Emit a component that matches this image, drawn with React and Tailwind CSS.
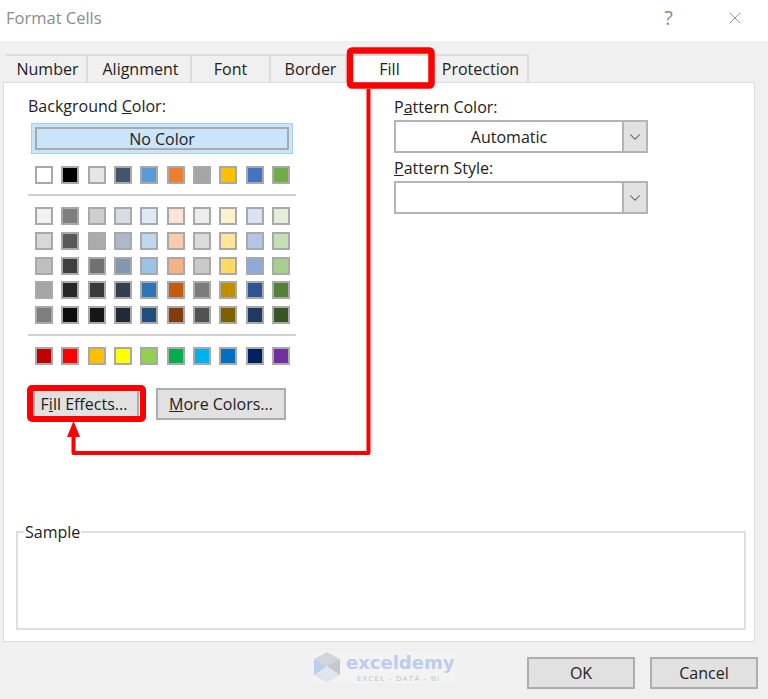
import { X, ChevronDown } from 'lucide-react';

const THEME = ['#ffffff', '#000000', '#e7e6e6', '#44546a', '#5b9bd5', '#ed7d31', '#a5a5a5', '#ffc000', '#4472c4', '#70ad47'];
const TINTS = [
  ['#f2f2f2', '#7f7f7f', '#d0cece', '#d6dce4', '#deebf6', '#fbe5d5', '#ededed', '#fff2cc', '#d9e2f3', '#e2efd9'],
  ['#d8d8d8', '#595959', '#aeaaaa', '#adb9ca', '#bdd7ee', '#f7cbac', '#dbdbdb', '#fee599', '#b4c6e7', '#c5e0b3'],
  ['#bfbfbf', '#3f3f3f', '#757070', '#8496b0', '#9cc3e5', '#f4b183', '#c9c9c9', '#ffd965', '#8eaadb', '#a8d08d'],
  ['#a5a5a5', '#262626', '#3a3838', '#323f4f', '#2e75b5', '#c55a11', '#7b7b7b', '#bf8f00', '#2f5496', '#538135'],
  ['#7f7f7f', '#0c0c0c', '#171616', '#222a35', '#1e4e79', '#833c0b', '#525252', '#7f6000', '#1f3864', '#375623'],
];
const STANDARD = ['#c00000', '#ff0000', '#ffc000', '#ffff00', '#92d050', '#00b050', '#00b0f0', '#0070c0', '#002060', '#7030a0'];

const TABS = [
  { label: 'Number', width: 'w-[82px] pl-[3px]' },
  { label: 'Alignment', width: 'w-[104px] pl-[3px]' },
  { label: 'Font', width: 'w-[79px]' },
  { label: 'Border', width: 'w-[76px] pl-[5px]' },
  { label: 'Fill', width: 'w-[87px]', active: true },
  { label: 'Protection', width: 'w-[95px]' },
];

function SwatchRow({ colors }) {
  return (
    <div className="flex w-[255px] justify-between">
      {colors.map((c, i) => (
        <div key={i} className="h-[18px] w-[18px] border-2 border-[#a9a9a9]" style={{ backgroundColor: c }} />
      ))}
    </div>
  );
}

function Select({ value }) {
  return (
    <div className="flex h-[33px] w-[254px] border-2 border-[#b4b4b4] bg-white">
      <div className="flex flex-1 items-center justify-center text-[#222]">{value}</div>
      <div className="flex w-[24px] items-center justify-center border-l-2 border-[#b4b4b4] bg-[#e1e1e1]">
        <ChevronDown size={18} strokeWidth={1.4} className="text-[#555]" />
      </div>
    </div>
  );
}

function Button({ children, className }) {
  return (
    <div className={`flex items-center justify-center border-2 border-[#adadad] bg-[#e1e1e1] text-[#222] ${className}`}>
      {children}
    </div>
  );
}

export default function App() {
  return (
    <div className="relative flex h-[699px] w-[768px] flex-col overflow-hidden bg-[#f0f0f0] font-['Open_Sans',sans-serif] text-[16px]">
      <header className="flex h-[41px] items-center justify-between bg-white pb-[5px] pl-[6px] pr-[23px]">
        <span className="text-[16.5px] text-[#8c8c8c]">Format Cells</span>
        <div className="flex items-center gap-[52px] text-[#8c8c8c]">
          <span className="text-[20px]">?</span>
          <X size={20} strokeWidth={1.1} />
        </div>
      </header>

      <div className="ml-[6px] mt-[13px] flex h-[28px]">
        {TABS.map((t) => (
          <div
            key={t.label}
            className={`flex items-center justify-center border-r-2 border-t-2 border-[#dcdcdc] text-[#222] ${t.width} ${t.active ? 'bg-white' : 'bg-[#f0f0f0]'}`}
          >
            {t.label}
          </div>
        ))}
      </div>

      <main className="ml-[3px] h-[560px] w-[752px] border border-[#dcdcdc] bg-white">
        <div className="flex h-[439px]">
          <section className="ml-[24px] w-[366px] pt-[13px]">
            <div className="h-[20px] leading-[20px] text-[#222]">
              Background <span className="underline">C</span>olor:
            </div>
            <div className="ml-[3px] mt-[7px] h-[31px] w-[262px] border border-[#a5d0f5] bg-[#c9e4fb] p-[3px]">
              <div className="flex h-full items-center justify-center border-2 border-[#a9a9a9] pt-[1px] text-[#222]">No Color</div>
            </div>
            <div className="ml-[7px] mt-[12px]">
              <SwatchRow colors={THEME} />
            </div>
            <div className="mt-[10px] h-[2px] w-[268px] bg-[#d0d0d0]" />
            <div className="ml-[7px] mt-[11px] flex flex-col gap-[6.8px]">
              {TINTS.map((row, i) => (
                <SwatchRow key={i} colors={row} />
              ))}
            </div>
            <div className="mt-[10px] h-[2px] w-[268px] bg-[#d0d0d0]" />
            <div className="ml-[7px] mt-[11px]">
              <SwatchRow colors={STANDARD} />
            </div>
            <div className="ml-[5px] mt-[23px] flex gap-[17px]">
              <Button className="h-[32px] w-[106px] pr-[4px]">
                <span>
                  F<span className="underline">i</span>ll Effects...
                </span>
              </Button>
              <Button className="h-[32px] w-[130px]">
                <span>
                  <span className="underline">M</span>ore Colors...
                </span>
              </Button>
            </div>
          </section>

          <section className="w-[254px] pt-[14px]">
            <div className="h-[20px] leading-[20px] text-[#222]">
              P<span className="underline">a</span>ttern Color:
            </div>
            <div className="mt-[3px]">
              <Select value="Automatic" />
            </div>
            <div className="mt-[5px] h-[20px] leading-[20px] text-[#222]">
              <span className="underline">P</span>attern Style:
            </div>
            <div className="mt-[3px]">
              <Select value="" />
            </div>
          </section>
        </div>

        <fieldset className="ml-[12px] h-[108px] w-[730px] border-2 border-[#dfdfdf] pl-[6px]">
          <legend className="px-[1px] leading-[20px] text-[#222]">Sample</legend>
        </fieldset>
      </main>

      <footer className="flex flex-1 items-start pl-[313px]">
        <div className="mt-[9px] flex h-[32px] w-[142px] items-center gap-[5px] bg-[#f3f3f3]">
          <svg width="28" height="32" viewBox="0 0 28 32">
            <path d="M14 1 L27 8 L14 15 L1 8 Z" fill="#d2d6dc" />
            <path d="M1 8 L14 15 V31 L1 24 Z" fill="#bccdee" />
            <path d="M27 8 L14 15 V31 L27 24 Z" fill="#c3c8d0" />
            <path d="M14 15 L27 24 L14 31 L1 24 Z" fill="#e1e6ec" />
          </svg>
          <div className="flex flex-col">
            <span className="font-['DejaVu_Sans',sans-serif] text-[18px] font-bold leading-[20px] text-[#bccdee]">exceldemy</span>
            <span className="pl-[11px] text-[8px] leading-[9px] tracking-[1.15px] text-[#bfc2c8]">EXCEL - DATA - BI</span>
          </div>
        </div>
        <div className="ml-[72px] mt-[15px] flex gap-[15px]">
          <Button className="h-[32px] w-[108px]">OK</Button>
          <Button className="h-[32px] w-[108px]">Cancel</Button>
        </div>
      </footer>

      {/* red annotation drawn over the dialog */}
      <svg className="absolute left-0 top-0" width="768" height="699" viewBox="0 0 768 699" fill="none">
        <rect x="350" y="50.5" width="81.5" height="35" rx="2" stroke="#ff0000" strokeWidth="6.5" />
        <rect x="30" y="388" width="113" height="31" rx="2" stroke="#ff0000" strokeWidth="6" />
        <path d="M368.5 89 V453 H73.5 V436" stroke="#ff0000" strokeWidth="4" strokeLinejoin="round" />
        <path d="M73.5 421 L80 437 H67 Z" fill="#ff0000" />
      </svg>
    </div>
  );
}
